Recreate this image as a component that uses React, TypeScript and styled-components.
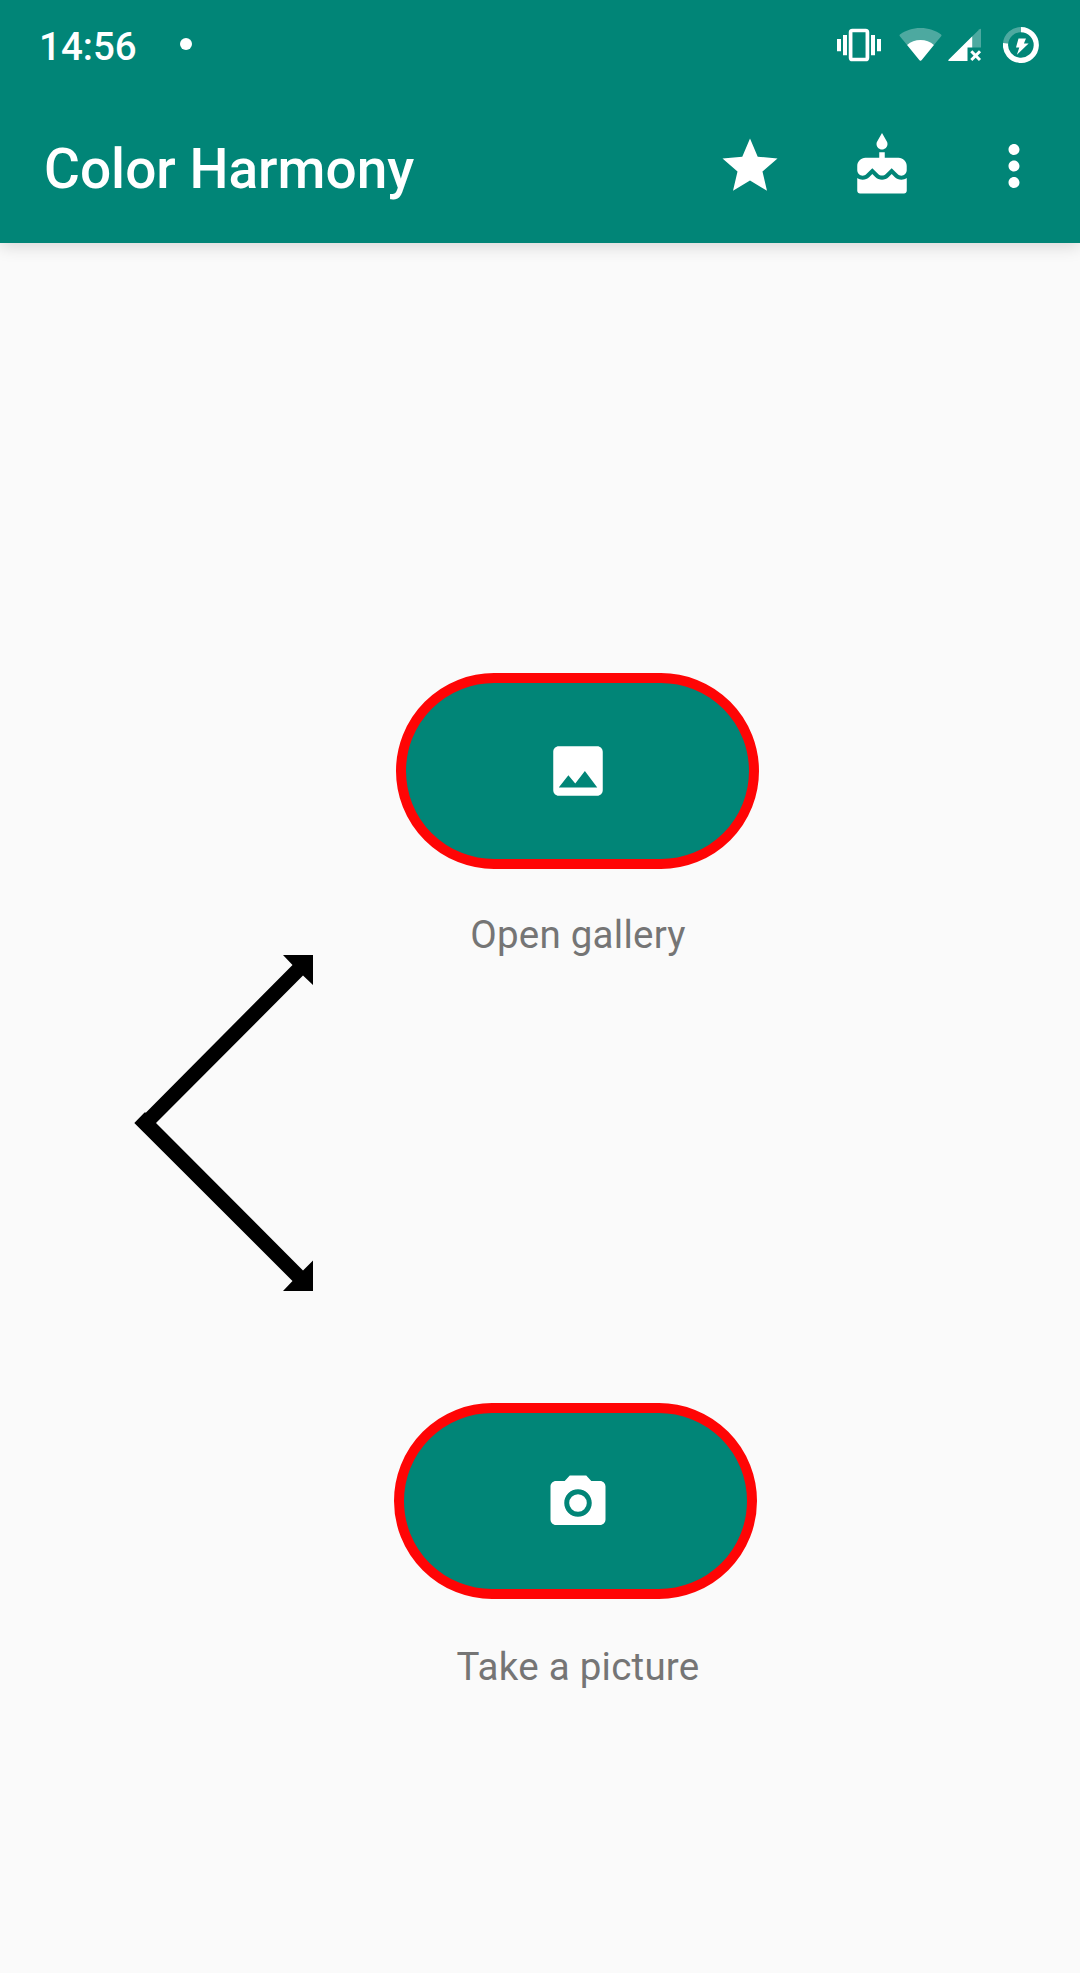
import React from "react";
import styled, { createGlobalStyle } from "styled-components";

const teal = "#018577";
const faded = "rgba(255, 255, 255, 0.3)";

const GlobalStyle = createGlobalStyle`
  * { box-sizing: border-box; }
  body { margin: 0; background: #fafafa; }
`;

const Screen = styled.div`
  width: 1080px;
  height: 1973px;
  display: flex;
  flex-direction: column;
  background: #fafafa;
  font-family: Roboto, "Liberation Sans", sans-serif;
  overflow: hidden;
`;

const Header = styled.header`
  flex: none;
  height: 243px;
  background: ${teal};
  color: #fff;
  box-shadow: 0 3px 16px rgba(0, 0, 0, 0.15);
`;

const StatusBar = styled.div`
  height: 89px;
  padding: 0 41px 0 39px;
  display: flex;
  align-items: center;
`;

const Clock = styled.time`
  font-size: 38.5px;
  font-weight: 500;
  line-height: 46px;
  padding-top: 4px;
  width: 141px;
`;

const NotificationDot = styled.span`
  width: 12px;
  height: 12px;
  margin-bottom: 1px;
  border-radius: 50%;
  background: #fff;
`;

const StatusIcons = styled.div`
  margin-left: auto;
  display: flex;
  align-items: center;
`;

const StatusIcon = styled.svg<{ $gap?: number }>`
  display: block;
  margin-left: ${(p) => p.$gap ?? 0}px;
`;

const Toolbar = styled.div`
  height: 154px;
  padding: 0 33px 0 44px;
  display: flex;
  align-items: center;
  justify-content: space-between;
`;

const Title = styled.h1`
  margin: 0;
  padding-top: 6px;
  font-size: 55px;
  font-weight: 500;
  line-height: 66px;
`;

const ToolbarActions = styled.div`
  display: flex;
  gap: 66px;
`;

const IconButton = styled.button`
  padding: 0;
  border: 0;
  background: none;
  color: inherit;
  display: block;
`;

const Glyph = styled.svg`
  display: block;
  width: 66px;
  height: 66px;
  fill: currentColor;
`;

const Main = styled.main`
  flex: 1;
  display: flex;
  align-items: flex-start;
  padding-left: 134px;
`;

const Pointer = styled.svg`
  display: block;
  flex: none;
  margin-top: 712px;
`;

const Choices = styled.div`
  width: 363px;
  margin: 430px 0 0 83px;
  display: flex;
  flex-direction: column;
  gap: 445px;
`;

const Choice = styled.section`
  height: 285px;
  display: flex;
  flex-direction: column;
  justify-content: space-between;
  align-items: center;
`;

const Pill = styled.button<{ $shift?: number }>`
  width: 363px;
  height: 196px;
  padding: 0;
  margin-left: ${(p) => -2 * (p.$shift ?? 0)}px;
  border: 10px solid #ff0505;
  border-radius: 98px;
  background: ${teal};
  color: #fff;
  display: flex;
  align-items: center;
  justify-content: center;
`;

const PillIcon = styled.span<{ $left: number; $top?: number }>`
  padding-left: ${(p) => p.$left}px;
  padding-top: ${(p) => p.$top ?? 0}px;
`;

const Label = styled.span<{ $drop?: number }>`
  font-size: 38.5px;
  line-height: 46px;
  letter-spacing: 0.25px;
  padding-left: 1px;
  color: #757575;
  white-space: nowrap;
  margin-bottom: ${(p) => -(p.$drop ?? 0)}px;
`;

function Icon({ d }: { d: string }) {
  return (
    <Glyph viewBox="0 0 24 24" aria-hidden="true">
      <path d={d} />
    </Glyph>
  );
}

const paths = {
  star: "M12 17.27L18.18 21l-1.64-7.03L22 9.24l-7.19-.61L12 2 9.19 8.63 2 9.24l5.46 4.73L5.82 21z",
  cake: "M12 6c1.11 0 2-.9 2-2 0-.38-.1-.73-.29-1.03L12 0l-1.71 2.97c-.19.3-.29.65-.29 1.03 0 1.1.9 2 2 2zm4.6 9.99l-1.07-1.07-1.08 1.07c-1.3 1.3-3.58 1.31-4.89 0l-1.07-1.07-1.09 1.07C6.75 16.64 5.88 17 4.96 17c-.73 0-1.4-.23-1.96-.61V21c0 .55.45 1 1 1h16c.55 0 1-.45 1-1v-4.61c-.56.38-1.23.61-1.96.61-.92 0-1.79-.36-2.44-1.01zM18 9h-5V7h-2v2H6c-1.66 0-3 1.34-3 3v1.54c0 1.08.88 1.96 1.96 1.96.52 0 1.02-.2 1.38-.57l2.14-2.13 2.13 2.13c.74.74 2.03.74 2.77 0l2.14-2.13 2.13 2.13c.37.37.86.57 1.38.57 1.08 0 1.96-.88 1.96-1.96V12C21 10.34 19.66 9 18 9z",
  more: "M12 8c1.1 0 2-.9 2-2s-.9-2-2-2-2 .9-2 2 .9 2 2 2zm0 2c-1.1 0-2 .9-2 2s.9 2 2 2 2-.9 2-2-.9-2-2-2zm0 6c-1.1 0-2 .9-2 2s.9 2 2 2 2-.9 2-2-.9-2-2-2z",
  image: "M21 19V5c0-1.1-.9-2-2-2H5c-1.1 0-2 .9-2 2v14c0 1.1.9 2 2 2h14c1.1 0 2-.9 2-2zM8.5 13.5l2.5 3.01L14.5 12l4.5 6H5l3.5-4.5z",
  camera:
    "M12 8.8a3.2 3.2 0 1 0 0 6.4 3.2 3.2 0 1 0 0-6.4zM9 2L7.17 4H4c-1.1 0-2 .9-2 2v12c0 1.1.9 2 2 2h16c1.1 0 2-.9 2-2V6c0-1.1-.9-2-2-2h-3.17L15 2H9zm3 15c-2.76 0-5-2.24-5-5s2.24-5 5-5 5 2.24 5 5-2.24 5-5 5z",
};

export default function App() {
  return (
    <>
      <GlobalStyle />
      <Screen>
        <Header>
          <StatusBar>
            <Clock>14:56</Clock>
            <NotificationDot />
            <StatusIcons>
              <StatusIcon width="44" height="44" viewBox="0 0 44 44">
                <path d="M0 16H4V28.200H0zM6 12H10V32.300H6zM34 12H38V32.300H34zM40 16H44V28.200H40z" fill="#fff" />
                <rect x="13.6" y="7.500" width="16.800" height="29" rx="1.800" fill="none" stroke="#fff" strokeWidth="3.700" />
              </StatusIcon>
              <StatusIcon $gap={18} width="43" height="34" viewBox="0 0 43 34">
                <path
                  d="M21.5 0C13.6 0 6.4 2.5.9 6.4Q.1 7.1.7 8L20.3 32.1Q21.5 33.4 22.7 32.1L42.3 8Q42.9 7.1 42.1 6.4C36.6 2.5 29.4 0 21.5 0z"
                  fill={faded}
                />
                <path
                  d="M21.5 12C16.3 12 11.8 13.6 8.1 16.9L20.3 32.1Q21.5 33.4 22.7 32.1L34.9 16.9C31.2 13.6 26.7 12 21.5 12z"
                  fill="#fff"
                />
              </StatusIcon>
              <StatusIcon $gap={6} width="34" height="34" viewBox="0 0 34 34">
                <path d="M24.3 8.3L31.5 1.2Q33 0 33 2V19.5H24.3z" fill={faded} />
                <path d="M24.3 8.3V19.5H19.5V33H1.5Q-.5 33 .8 31.6z" fill="#fff" />
                <path d="M23.3 23.3L32 32M32 23.3L23.3 32" stroke="#fff" strokeWidth="3" />
              </StatusIcon>
              <StatusIcon $gap={21} width="36" height="36" viewBox="0 0 36 36">
                <path d="M2.6 16.2A15.4 15.4 0 0 1 18 2.6" fill="none" stroke={faded} strokeWidth="5.2" />
                <path d="M18 2.6A15.4 15.4 0 1 1 2.6 16.2" fill="none" stroke="#fff" strokeWidth="5.2" />
                <path d="M15.500 11.400H23L20.900 16.500H25.600L13.900 27.800L16.300 20.500H13z" fill="#fff" />
              </StatusIcon>
            </StatusIcons>
          </StatusBar>
          <Toolbar>
            <Title>Color Harmony</Title>
            <ToolbarActions>
              <IconButton aria-label="Favorites">
                <Icon d={paths.star} />
              </IconButton>
              <IconButton aria-label="Donate">
                <Icon d={paths.cake} />
              </IconButton>
              <IconButton aria-label="More options">
                <Icon d={paths.more} />
              </IconButton>
            </ToolbarActions>
          </Toolbar>
        </Header>
        <Main>
          <Pointer width="179" height="336" viewBox="0 0 179 336">
            <path d="M149 0H179V30L169 20.6L22 168L169 315.4L179 305.5V336H149L158.5 326L.3 168L10.5 157.5H12L158.5 10z" />
          </Pointer>
          <Choices>
            <Choice>
              <Pill aria-label="Open gallery">
                <PillIcon $left={1}>
                  <Icon d={paths.image} />
                </PillIcon>
              </Pill>
              <Label>Open gallery</Label>
            </Choice>
            <Choice>
              <Pill $shift={2} aria-label="Take a picture">
                <PillIcon $left={4} $top={3}>
                  <Icon d={paths.camera} />
                </PillIcon>
              </Pill>
              <Label $drop={2}>Take a picture</Label>
            </Choice>
          </Choices>
        </Main>
      </Screen>
    </>
  );
}
